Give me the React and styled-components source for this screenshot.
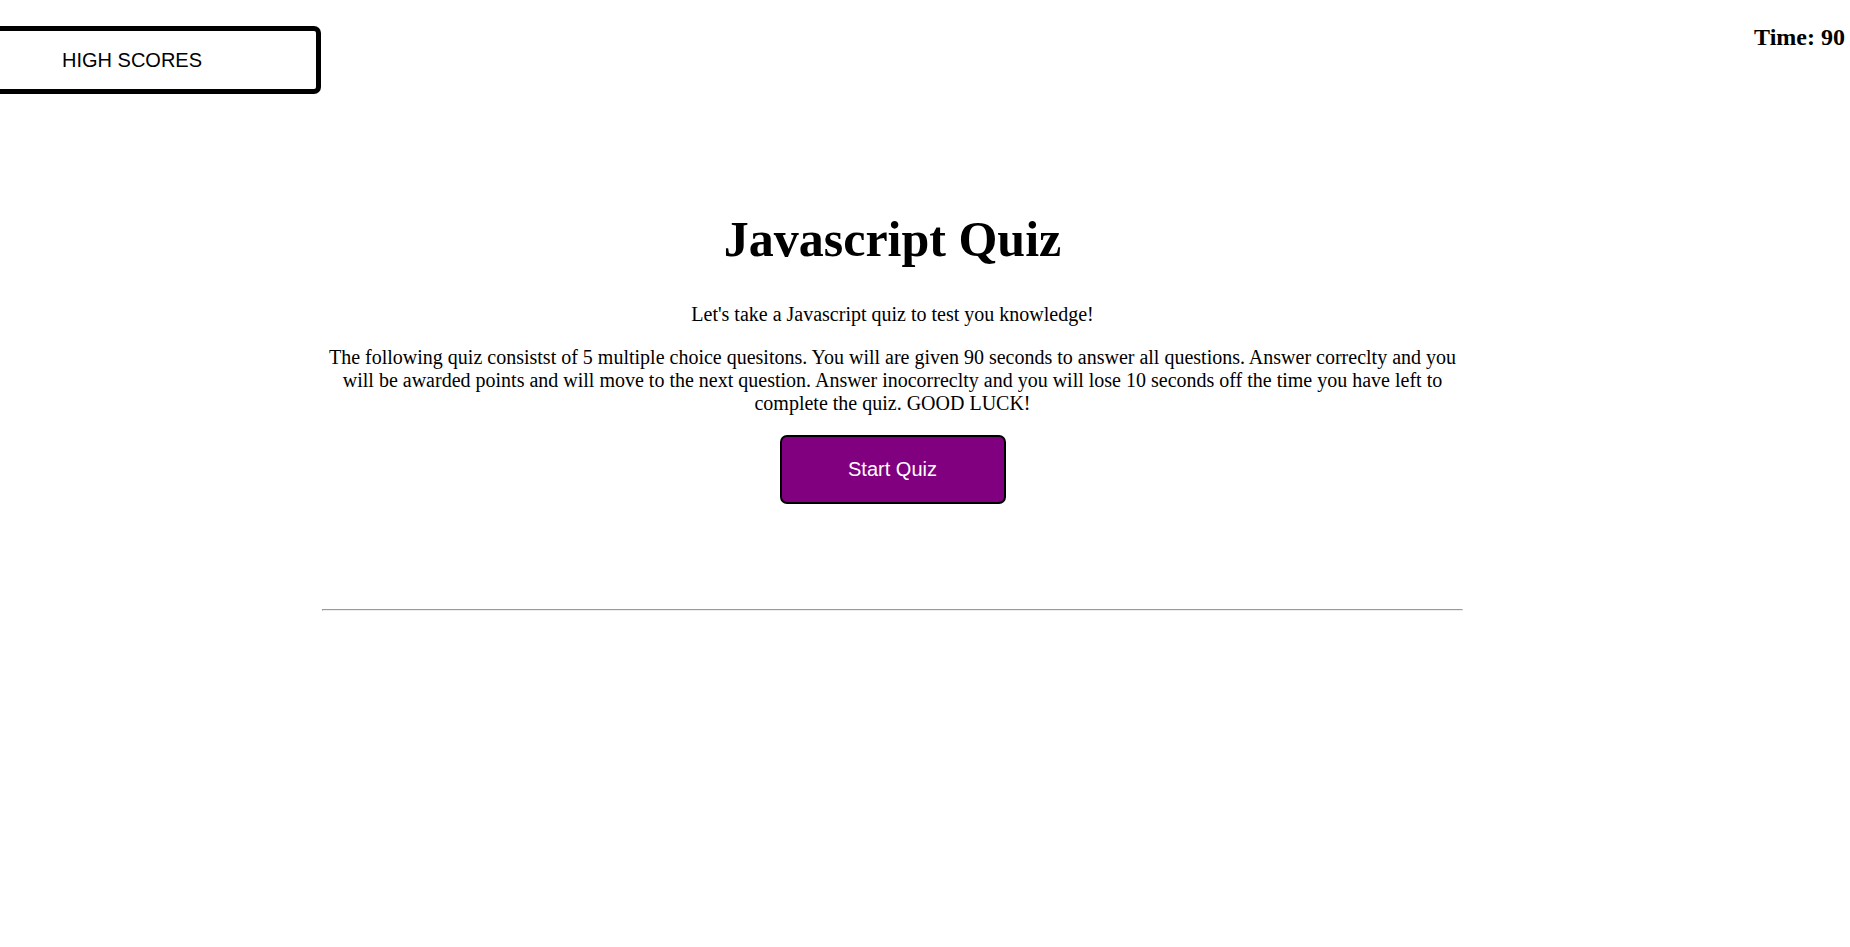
import React from "react";
import styled, { createGlobalStyle } from "styled-components";

const GlobalStyle = createGlobalStyle`
  html, body {
    margin: 0;
    padding: 0;
    background: #ffffff;
    color: #000000;
    font-family: "Liberation Serif", "Times New Roman", serif;
  }
`;

const Header = styled.header`
  display: flex;
  justify-content: space-between;
  align-items: flex-start;
  padding-top: 24px;
`;

const HighScoresButton = styled.button`
  box-sizing: border-box;
  margin-top: 2px;
  width: 321px;
  height: 68px;
  padding: 0 0 0 62px;
  text-align: left;
  background: #ffffff;
  color: #000000;
  border: 5px solid #000000;
  border-left: none;
  border-radius: 0 7px 7px 0;
  font-family: "Liberation Sans", Arial, sans-serif;
  font-size: 20px;
  cursor: pointer;
`;

const Timer = styled.h2`
  margin: 0;
  padding-right: 5px;
  font-family: "Liberation Serif", "Times New Roman", serif;
  font-size: 24px;
  font-weight: bold;
`;

const Main = styled.main`
  margin-left: 322px;
  width: 1141px;
  text-align: center;
`;

const Title = styled.h1`
  margin: 116px 0 35px;
  font-size: 50px;
  font-weight: bold;
`;

const Text = styled.p`
  margin: 20px 0;
  font-size: 20px;
`;

const Intro = styled(Text)`
  margin-top: 0;
`;

const ButtonRow = styled.div`
  display: flex;
  justify-content: center;
`;

const StartButton = styled.button`
  box-sizing: border-box;
  width: 226px;
  height: 69px;
  background: #800080;
  color: #ffffff;
  border: 2px solid #000000;
  border-radius: 7px;
  font-family: "Liberation Sans", Arial, sans-serif;
  font-size: 20px;
  cursor: pointer;
`;

const Divider = styled.hr`
  margin: 105px 0 0;
  height: 0;
  border-style: solid;
  border-width: 1px;
  border-color: #9a9a9a #eeeeee #eeeeee #9a9a9a;
`;

export default function App() {
  return (
    <>
      <GlobalStyle />
      <Header>
        <HighScoresButton>HIGH SCORES</HighScoresButton>
        <Timer>Time: 90</Timer>
      </Header>
      <Main>
        <Title>Javascript Quiz</Title>
        <Intro>Let's take a Javascript quiz to test you knowledge!</Intro>
        <Text>
          The following quiz consistst of 5 multiple choice quesitons. You will
          are given 90 seconds to answer all questions. Answer correclty and you
          will be awarded points and will move to the next question. Answer
          inocorreclty and you will lose 10 seconds off the time you have left
          to complete the quiz. GOOD LUCK!
        </Text>
        <ButtonRow>
          <StartButton>Start Quiz</StartButton>
        </ButtonRow>
        <Divider />
      </Main>
    </>
  );
}
